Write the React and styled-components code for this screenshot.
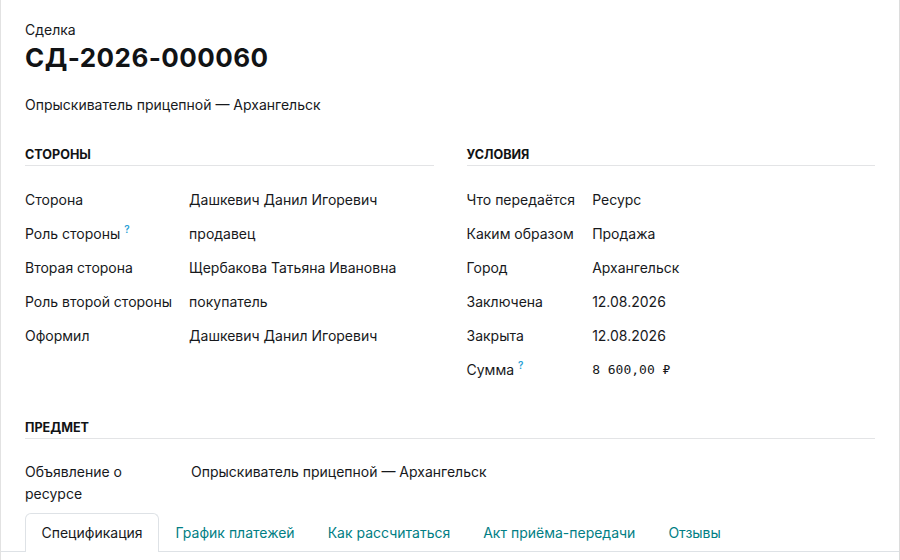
import styled, { createGlobalStyle } from "styled-components";

const GlobalStyle = createGlobalStyle`
  html, body {
    margin: 0;
    background: #fff;
  }
  body {
    font-family: Inter, "Noto Sans", sans-serif;
    font-size: 14px;
    color: #17191c;
  }
`;

const parties = [
  { label: "Сторона", value: "Дашкевич Данил Игоревич" },
  { label: "Роль стороны", value: "продавец", hint: true },
  { label: "Вторая сторона", value: "Щербакова Татьяна Ивановна" },
  { label: "Роль второй стороны", value: "покупатель" },
  { label: "Оформил", value: "Дашкевич Данил Игоревич" },
];

const terms = [
  { label: "Что передаётся", value: "Ресурс" },
  { label: "Каким образом", value: "Продажа" },
  { label: "Город", value: "Архангельск" },
  { label: "Заключена", value: "12.08.2026" },
  { label: "Закрыта", value: "12.08.2026" },
  { label: "Сумма", value: "8 600,00 ₽", hint: true, mono: true },
];

const tabs = ["Спецификация", "График платежей", "Как рассчитаться", "Акт приёма-передачи", "Отзывы"];

const FieldList = ({ items }) => (
  <Fields>
    {items.map((f) => (
      <Row key={f.label}>
        <Label>
          {f.label}
          {f.hint && <Hint>?</Hint>}
        </Label>
        <Value $mono={f.mono}>{f.value}</Value>
      </Row>
    ))}
  </Fields>
);

const App = () => (
  <>
    <GlobalStyle />
    <Sheet>
      <Caption>Сделка</Caption>
      <Title>СД-2026-000060</Title>
      <Subtitle>Опрыскиватель прицепной — Архангельск</Subtitle>

      <Columns>
        <Section>
          <SectionTitle>Стороны</SectionTitle>
          <FieldList items={parties} />
        </Section>
        <Section>
          <SectionTitle>Условия</SectionTitle>
          <FieldList items={terms} />
        </Section>
      </Columns>

      <Section $wide>
        <SectionTitle>Предмет</SectionTitle>
        <SubjectRow>
          <Label>Объявление о ресурсе</Label>
          <Value>Опрыскиватель прицепной — Архангельск</Value>
        </SubjectRow>
      </Section>

      <TabBar>
        {tabs.map((t, i) => (
          <Tab key={t} $active={i === 0}>
            {t}
          </Tab>
        ))}
      </TabBar>
    </Sheet>
  </>
);

const Sheet = styled.div`
  box-sizing: border-box;
  width: 900px;
  height: 560px;
  overflow: hidden;
  padding: 20px 24px 0 24px;
  border-left: 1px solid #e2e2e2;
  border-right: 1px solid #dcdcdc;
`;

const Caption = styled.div`
  font-size: 14px;
  line-height: 20px;
`;

const Title = styled.h1`
  margin: 0;
  padding-top: 1px;
  font-size: 26px;
  line-height: 34px;
  font-weight: 700;
  color: #111315;
  letter-spacing: 0.45px;
`;

const Subtitle = styled.div`
  margin-top: 19px;
  line-height: 22px;
`;

const Columns = styled.div`
  display: grid;
  grid-template-columns: 1fr 1fr;
  column-gap: 33px;
  margin-top: 29px;
`;

const Section = styled.section`
  margin-top: ${(p) => (p.$wide ? "31px" : "0")};
`;

const SectionTitle = styled.div`
  font-size: 12.6px;
  line-height: 20px;
  font-weight: 700;
  text-transform: uppercase;
  color: #111315;
  border-bottom: 1px solid #e3e4e6;
  margin-bottom: 17px;
`;

const Fields = styled.div`
  display: grid;
  grid-template-columns: max-content 1fr;
  column-gap: 17px;
`;

const Row = styled.div`
  display: contents;
`;

const Label = styled.div`
  padding: 6px 0;
  line-height: 22px;
`;

const Value = styled.div`
  padding: 6px 0;
  line-height: 22px;
  font-family: ${(p) => (p.$mono ? '"DejaVu Sans Mono", monospace' : "inherit")};
  font-size: ${(p) => (p.$mono ? "13px" : "14px")};
`;

const Hint = styled.sup`
  margin-left: 4px;
  font-size: 10px;
  font-weight: 600;
  color: #2a9fd6;
  vertical-align: 6px;
  line-height: 0;
`;

const SubjectRow = styled.div`
  display: grid;
  grid-template-columns: 150px 1fr;
  column-gap: 16px;
  margin-top: -1px;
`;

const TabBar = styled.nav`
  display: flex;
  margin: 2px -24px 0 -24px;
  padding-left: 24px;
  border-bottom: 1px solid #dee2e6;
`;

const Tab = styled.div`
  padding: 9px 15.5px;
  line-height: 20px;
  color: ${(p) => (p.$active ? "#17191c" : "#017e84")};
  background: ${(p) => (p.$active ? "#fff" : "transparent")};
  border: 1px solid ${(p) => (p.$active ? "#dee2e6" : "transparent")};
  border-bottom: none;
  border-radius: 6px 6px 0 0;
  margin-bottom: -1px;
`;

export default App;
